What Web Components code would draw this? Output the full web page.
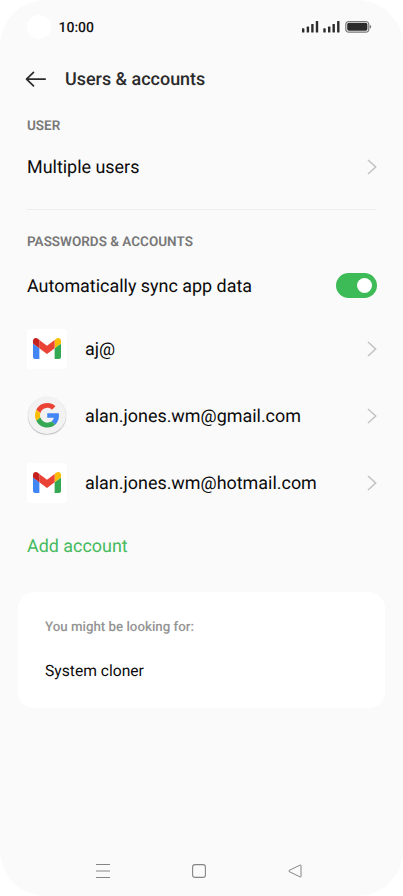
<!DOCTYPE html>
<html lang="en"><head><meta charset="utf-8"><title>Users &amp; accounts</title>
<style>html,body{margin:0;background:#fff}body{font-family:Roboto,"Liberation Sans",sans-serif;color:#0a0a0a;text-rendering:geometricPrecision}</style></head>
<body>
<phone-screen>
  <status-bar>10:00</status-bar>
  <page-header>Users &amp; accounts</page-header>
  <section-title style="--h:41px">USER</section-title>
  <setting-row style="--h:43px">Multiple users<chevron-icon slot="end"></chevron-icon></setting-row>
  <row-divider></row-divider>
  <section-title style="--h:40px">PASSWORDS &amp; ACCOUNTS</section-title>
  <setting-row style="--h:49px">Automatically sync app data<toggle-switch slot="end"></toggle-switch></setting-row>
  <setting-row style="--h:67px;margin-top:5px"><gmail-icon slot="start"></gmail-icon>aj@<chevron-icon slot="end"></chevron-icon></setting-row>
  <setting-row style="--h:67px"><google-icon slot="start"></google-icon>alan.jones.wm@gmail.com<chevron-icon slot="end"></chevron-icon></setting-row>
  <setting-row style="--h:67px"><gmail-icon slot="start"></gmail-icon>alan.jones.wm@hotmail.com<chevron-icon slot="end"></chevron-icon></setting-row>
  <setting-row style="--h:59px;--ink:#45bb5e">Add account</setting-row>
  <hint-card><span slot="title">You might be looking for:</span>System cloner</hint-card>
  <nav-bar></nav-bar>
</phone-screen>
<script>
const define = (name, html) => customElements.define(name, class extends HTMLElement {
  constructor() { super(); this.attachShadow({ mode: 'open' }).innerHTML = html; }
});
define('phone-screen', `<style>:host{display:flex;flex-direction:column;width:403px;height:896px;background:#fafafa;border-radius:46px;overflow:hidden}</style><slot></slot>`);
define('status-bar', `<style>
:host{display:flex;align-items:center;height:54px;padding:0 31px 0 27px;box-sizing:border-box;font-size:14px;font-weight:500;color:#111;flex:none}
i{width:24px;height:24px;border-radius:50%;background:#fff;margin-right:7.5px}span{flex:1;padding-top:2px}svg{display:block}</style>
<i></i><span><slot></slot></span>
<svg width="70" height="14" viewBox="302 20 70 14" fill="#2b2b2b">
<g id="s"><rect x="302" y="28.3" width="2.4" height="4.2" rx=".6"/><rect x="306.7" y="26.6" width="2.4" height="5.9" rx=".6"/><rect x="311.2" y="24" width="2.4" height="8.5" rx=".6"/><rect x="315.8" y="21" width="2.4" height="11.5" rx=".6"/></g>
<use href="#s" x="21.3"/>
<rect x="345.8" y="21.5" width="23" height="10.6" rx="3.2" fill="none" stroke="#777" stroke-width="1.2"/><rect x="347.2" y="22.8" width="20.2" height="8" rx="1.8"/><path d="M369.8 24.8q1.4.3 1.4 2t-1.4 2z" fill="#777"/></svg>`);
define('page-header', `<style>
:host{display:flex;align-items:center;height:50px;padding-left:25px;gap:18px;font-size:17.95px;font-weight:500;color:#2b2b2b;flex:none}</style>
<svg width="22" height="18" viewBox="25 70 22 18" fill="none" stroke="#2b2b2b" stroke-width="1.7" stroke-linecap="round" stroke-linejoin="round"><path d="M45.2 79.1H26.5M33.5 72.4L26.5 79.1L33.5 85.8"/></svg><slot></slot>`);
define('section-title', `<style>:host{display:flex;align-items:center;height:var(--h);padding:2px 27px 0;box-sizing:border-box;font-size:13.5px;font-weight:600;color:#777;flex:none}</style><slot></slot>`);
define('setting-row', `<style>
:host{display:flex;align-items:center;height:var(--h);padding:0 26.5px 0 27px;font-size:17.93px;color:var(--ink,#0a0a0a);flex:none}
span{flex:1;padding-top:2px;white-space:nowrap}::slotted([slot=start]){margin-right:18px}</style>
<slot name="start"></slot><span><slot></slot></span><slot name="end"></slot>`);
define('row-divider', `<style>:host{display:block;height:1px;margin:21px 27px 11px;background:#eee;flex:none}</style>`);
define('chevron-icon', `<style>:host{display:block}svg{display:block}</style>
<svg width="10" height="18" viewBox="0 0 10 18" fill="none" stroke="#c2c2c2" stroke-width="1.5"><path d="M1 2L8.7 9L1 16"/></svg>`);
define('toggle-switch', `<style>:host{display:flex;align-items:center;justify-content:flex-end;width:40.5px;height:25px;padding-right:5px;box-sizing:border-box;border-radius:13px;background:#3dbb56}i{width:15px;height:15px;border-radius:50%;background:#fff}</style><i></i>`);
define('gmail-icon', `<style>:host{display:flex;align-items:center;justify-content:center;width:40px;height:40px;border-radius:3px;background:#fff}</style>
<svg width="28" height="21" viewBox="52 42 88 66"><path fill="#4285f4" d="M58 108h14V74L52 59v43c0 3.32 2.69 6 6 6"/><path fill="#34a853" d="M120 108h14c3.32 0 6-2.69 6-6V59l-20 15"/><path fill="#fbbc04" d="M120 48v26l20-15v-8c0-7.42-8.47-11.65-14.4-7.2"/><path fill="#ea4335" d="M72 74V48l24 18 24-18v26L96 92"/><path fill="#c5221f" d="M52 51v8l20 15V48l-5.600-4.200c-5.940-4.450-14.400-.22-14.400 7.200"/></svg>`);
define('google-icon', `<style>:host{display:flex;align-items:center;justify-content:center;width:40px;height:40px}
div{display:flex;align-items:center;justify-content:center;width:37.5px;height:37.5px;border-radius:50%;background:#f2f2f2;box-shadow:0 .6px 1px #aaa}</style>
<div><svg width="24.5" height="24.5" viewBox="0 0 48 48"><path fill="#ea4335" d="M24 9.500c3.540 0 6.710 1.220 9.210 3.600l6.850-6.850C35.900 2.380 30.470 0 24 0 14.620 0 6.510 5.380 2.560 13.220l7.980 6.190C12.430 13.720 17.740 9.500 24 9.500z"/><path fill="#4285f4" d="M46.980 24.550c0-1.570-.15-3.090-.38-4.550H24v9.020h12.940c-.58 2.960-2.260 5.480-4.780 7.180l7.730 6c4.510-4.180 7.090-10.360 7.090-17.650z"/><path fill="#fbbc05" d="M10.530 28.590A14.500 14.500 0 0 1 9.770 24c0-1.600.27-3.140.76-4.590l-7.980-6.190A24 24 0 0 0 0 24c0 3.880.92 7.540 2.560 10.780z"/><path fill="#34a853" d="M24 48c6.480 0 11.930-2.130 15.890-5.810l-7.730-6c-2.150 1.450-4.920 2.300-8.160 2.300-6.260 0-11.570-4.220-13.470-9.910l-7.980 6.190C6.510 42.620 14.620 48 24 48z"/></svg></div>`);
define('hint-card', `<style>
:host{display:flex;flex-direction:column;height:116px;margin:17px 18px 0;padding:26px 27px 0;box-sizing:border-box;border-radius:16px;background:#fff;flex:none;font-size:15.65px}
div{line-height:20px}.t{font-size:13.3px;font-weight:500;color:#949494;margin-bottom:23px}</style>
<div class="t"><slot name="title"></slot></div><div><slot></slot></div>`);
define('nav-bar', `<style>:host{display:flex;align-items:center;justify-content:space-between;height:50px;margin-top:auto;padding:0 101px 0 96px}svg{display:block}</style>
<svg width="14" height="16" fill="none" stroke="#858585"><path d="M0 1.500H14M0 8H14M0 14.500H14" stroke-width="1.1"/></svg>
<svg width="14" height="16" fill="none" stroke="#858585"><rect x=".6" y="1.600" width="12.800" height="12.800" rx="2.500" stroke-width="1.100"/></svg>
<svg width="14" height="16" fill="none" stroke="#858585"><path d="M12.300 2Q13 1.700 13 2.500V13.500Q13 14.300 12.300 14L1 8.500Q.3 8 1 7.500Z"/></svg>`);
</script>
</body></html>
